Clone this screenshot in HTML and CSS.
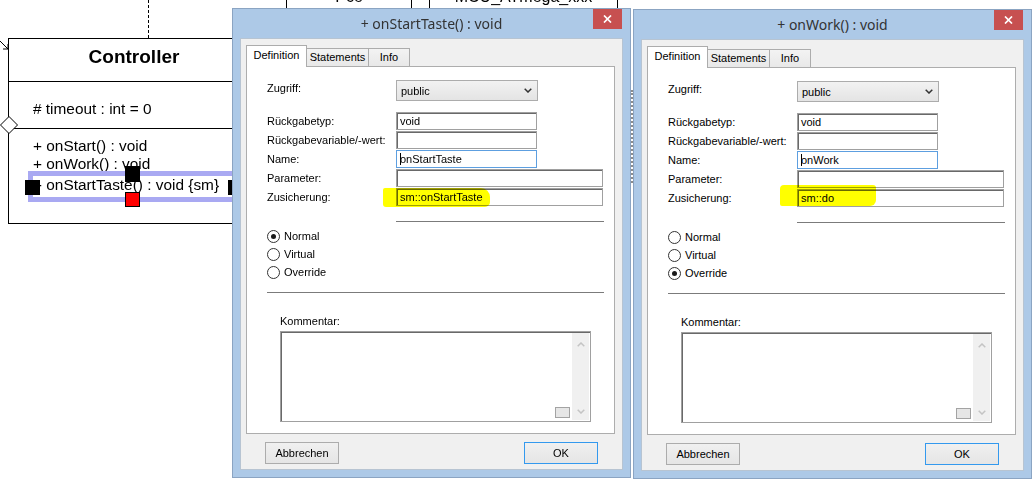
FILE: index.html
```html
<html lang="de">
<head>
    <meta charset="UTF-8">
    <title>Operation bearbeiten</title>
    <link rel="stylesheet" href="styles.css">
</head>
<body>
    <!-- diagram canvas behind the dialogs -->
    <div class="top-box pce">Pce</div>
    <div class="top-box mcu">MCU_ATmega_xxx</div>
    <div class="edge-dash"></div>
    <div class="edge-peek"></div>
    <svg class="edge-arrow" width="10" height="12" viewBox="0 0 10 12">
        <path d="M0 2 L8 10 M3 10 L8 10 L8 5" fill="none" stroke="#000" stroke-width="1"/>
    </svg>
    <svg class="edge-diamond" width="18" height="18" viewBox="0 0 18 18">
        <polygon points="0.5,9 9,0.5 17.5,9 9,17.5" fill="#fff" stroke="#000" stroke-width="1"/>
    </svg>

    <div class="uml-class">
        <div class="uml-name">Controller</div>
        <div class="uml-attrs">
            <div># timeout : int = 0</div>
        </div>
        <div class="uml-ops">
            <div class="op">+ onStart() : void</div>
            <div class="op">+ onWork() : void</div>
            <div class="op selected">
                + onStartTaste() : void {sm}
                <span class="handle h-left"></span>
                <span class="handle h-top"></span>
                <span class="handle h-bottom"></span>
                <span class="handle h-right"></span>
            </div>
        </div>
    </div>

    <!-- Dialog 1 -->
    <div class="dialog d1">
        <div class="titlebar">
            <span class="title">+ onStartTaste() : void</span>
            <span class="close">
                <svg width="9" height="8" viewBox="0 0 9 8"><path d="M1 0.5 L8 7.5 M8 0.5 L1 7.5" stroke="#fff" stroke-width="1.7"/></svg>
            </span>
        </div>
        <div class="client">
            <div class="tabs">
                <div class="tab tab-def active">Definition</div>
                <div class="tab tab-stm">Statements</div>
                <div class="tab tab-info">Info</div>
            </div>
            <div class="panel">
                <div class="access-row">
                    <span class="label">Zugriff:</span>
                    <div class="select">
                        <span>public</span>
                        <svg width="8" height="5" viewBox="0 0 8 5"><path d="M0.7 0.7 L4 4 L7.3 0.7" fill="none" stroke="#333" stroke-width="1.5"/></svg>
                    </div>
                </div>
                <div class="fields">
                    <span class="label">Rückgabetyp:</span>
                    <div class="field">void</div>
                    <span class="label">Rückgabevariable/-wert:</span>
                    <div class="field"></div>
                    <span class="label">Name:</span>
                    <div class="field focus"><span class="caret"></span>onStartTaste</div>
                    <span class="label">Parameter:</span>
                    <div class="field wide"></div>
                    <span class="label">Zusicherung:</span>
                    <div class="field wide">sm::onStartTaste</div>
                </div>
                <div class="sep sep-short"></div>
                <div class="radios">
                    <div class="radio-row"><span class="radio on"></span>Normal</div>
                    <div class="radio-row"><span class="radio"></span>Virtual</div>
                    <div class="radio-row"><span class="radio"></span>Override</div>
                </div>
                <div class="sep sep-long"></div>
                <div class="comment-label">Kommentar:</div>
                <div class="textarea">
                    <div class="scroll">
                        <svg width="8" height="5" viewBox="0 0 8 5"><path d="M0.7 4.3 L4 1 L7.3 4.3" fill="none" stroke="#c4c4c4" stroke-width="1.5"/></svg>
                        <svg width="8" height="5" viewBox="0 0 8 5"><path d="M0.7 0.7 L4 4 L7.3 0.7" fill="none" stroke="#c4c4c4" stroke-width="1.5"/></svg>
                    </div>
                    <span class="grip"></span>
                </div>
            </div>
            <div class="buttons">
                <button>Abbrechen</button>
                <button class="ok">OK</button>
            </div>
        </div>
        <span class="mark mark1"></span>
    </div>

    <!-- Dialog 2 -->
    <div class="dialog d2">
        <div class="titlebar">
            <span class="title">+ onWork() : void</span>
            <span class="close">
                <svg width="9" height="8" viewBox="0 0 9 8"><path d="M1 0.5 L8 7.5 M8 0.5 L1 7.5" stroke="#fff" stroke-width="1.7"/></svg>
            </span>
        </div>
        <div class="client">
            <div class="tabs">
                <div class="tab tab-def active">Definition</div>
                <div class="tab tab-stm">Statements</div>
                <div class="tab tab-info">Info</div>
            </div>
            <div class="panel">
                <div class="access-row">
                    <span class="label">Zugriff:</span>
                    <div class="select">
                        <span>public</span>
                        <svg width="8" height="5" viewBox="0 0 8 5"><path d="M0.7 0.7 L4 4 L7.3 0.7" fill="none" stroke="#333" stroke-width="1.5"/></svg>
                    </div>
                </div>
                <div class="fields">
                    <span class="label">Rückgabetyp:</span>
                    <div class="field">void</div>
                    <span class="label">Rückgabevariable/-wert:</span>
                    <div class="field"></div>
                    <span class="label">Name:</span>
                    <div class="field focus"><span class="caret"></span>onWork</div>
                    <span class="label">Parameter:</span>
                    <div class="field wide"></div>
                    <span class="label">Zusicherung:</span>
                    <div class="field wide">sm::do</div>
                </div>
                <div class="sep sep-short"></div>
                <div class="radios">
                    <div class="radio-row"><span class="radio"></span>Normal</div>
                    <div class="radio-row"><span class="radio"></span>Virtual</div>
                    <div class="radio-row"><span class="radio on"></span>Override</div>
                </div>
                <div class="sep sep-long"></div>
                <div class="comment-label">Kommentar:</div>
                <div class="textarea">
                    <div class="scroll">
                        <svg width="8" height="5" viewBox="0 0 8 5"><path d="M0.7 4.3 L4 1 L7.3 4.3" fill="none" stroke="#c4c4c4" stroke-width="1.5"/></svg>
                        <svg width="8" height="5" viewBox="0 0 8 5"><path d="M0.7 0.7 L4 4 L7.3 0.7" fill="none" stroke="#c4c4c4" stroke-width="1.5"/></svg>
                    </div>
                    <span class="grip"></span>
                </div>
            </div>
            <div class="buttons">
                <button>Abbrechen</button>
                <button class="ok">OK</button>
            </div>
        </div>
        <span class="mark mark2"></span>
    </div>
</body>
</html>
```

FILE: styles.css
```css
/* General */
* {
    box-sizing: border-box;
}
body {
    margin: 0;
    width: 1036px;
    height: 484px;
    position: relative;
    overflow: hidden;
    background: #fff;
    font-family: "Liberation Sans", Arial, sans-serif;
    color: #000;
}

/* Diagram canvas */
.top-box {
    position: absolute;
    top: -30px;
    height: 38px;
    border-left: 1px solid #000;
    border-right: 1px solid #000;
    display: flex;
    justify-content: center;
    align-items: flex-end;
    padding-bottom: 2px;
    font-size: 16px;
    line-height: 18px;
}
.pce {
    left: 286px;
    width: 126px;
}
.mcu {
    left: 429px;
    width: 189px;
}
.edge-dash {
    position: absolute;
    left: 148px;
    top: 0;
    height: 38px;
    border-left: 1px dashed #000;
}
.edge-peek {
    position: absolute;
    left: 631px;
    top: 90px;
    height: 93px;
    border-left: 2px dotted #8c8c8c;
}
.edge-arrow {
    position: absolute;
    left: 0;
    top: 39px;
}
.edge-diamond {
    position: absolute;
    left: 0;
    top: 116px;
    z-index: 2;
}
.uml-class {
    position: absolute;
    left: 8px;
    top: 38px;
    width: 252px;
    height: 186px;
    border: 1px solid #000;
    font-size: 15.4px;
    background: #fff;
}
.uml-name {
    height: 43px;
    border-bottom: 1px solid #000;
    text-align: center;
    font-weight: bold;
    font-size: 19px;
    line-height: 22px;
    padding-top: 7px;
}
.uml-attrs {
    height: 47px;
    border-bottom: 1px solid #000;
    padding: 18px 0 0 24px;
    line-height: 18px;
}
.uml-ops {
    padding: 8px 0 0 24px;
    line-height: 18px;
}
.op {
    white-space: nowrap;
}
.op.selected {
    position: relative;
    margin: -2px 0 0 -5px;
    width: 209px;
    height: 31px;
    border: 5px solid #a9a9f2;
    background: #fff;
    line-height: 17px;
}
.handle {
    position: absolute;
    width: 15px;
    height: 15px;
    background: #000;
}
.h-left {
    left: -8px;
    top: 4px;
}
.h-right {
    left: 195px;
    top: 4px;
}
.h-top {
    left: 92px;
    top: -10px;
    height: 16px;
}
.h-bottom {
    left: 92px;
    top: 16px;
    background: #f00;
    border: 1px solid #000;
}

/* Dialog windows */
.dialog {
    position: absolute;
    width: 399px;
    height: 470px;
    border: 1px solid #8ba4c2;
    background: #adc9e7;
    display: flex;
    flex-direction: column;
    font-size: 11px;
}
.d1 {
    left: 232px;
    top: 8px;
}
.d2 {
    left: 633px;
    top: 9px;
}
.titlebar {
    height: 29px;
    position: relative;
    display: flex;
    align-items: center;
    justify-content: center;
    font-family: "Noto Sans", sans-serif;
    font-size: 14px;
    color: #333;
}
.close {
    position: absolute;
    right: 8px;
    top: 0;
    width: 29px;
    height: 20px;
    background: #c75050;
    display: flex;
    align-items: center;
    justify-content: center;
}
.client {
    flex: 1;
    margin: 0 7px 7px;
    border: 1px solid #b7c4d2;
    background: #f0f0f0;
    padding: 6px 7px 0 5px;
    display: flex;
    flex-direction: column;
}
.tabs {
    display: flex;
    align-items: flex-end;
    height: 21px;
    position: relative;
    z-index: 1;
}
.tab {
    height: 18px;
    border: 1px solid #acacac;
    border-bottom: none;
    background: linear-gradient(#f3f3f3, #e8e8e8);
    line-height: 16px;
    text-align: center;
}
.tab.active {
    height: 22px;
    margin-bottom: -1px;
    background: #fff;
    line-height: 19px;
    position: relative;
    z-index: 2;
}
.tab-def {
    width: 61px;
}
.tab-stm {
    width: 63px;
    margin-left: -1px;
}
.tab-info {
    width: 42px;
    margin-left: -1px;
}
.panel {
    height: 368px;
    border: 1px solid #adadad;
    background: #fff;
    padding: 13px 0 0 20px;
}
.label {
    white-space: nowrap;
    line-height: 13px;
}
.access-row {
    display: flex;
    height: 21px;
    margin-bottom: 11px;
}
.access-row .label {
    width: 129px;
    padding-top: 2px;
}
.select {
    width: 142px;
    height: 21px;
    border: 1px solid #acacac;
    background: linear-gradient(#f2f2f2, #e4e4e4);
    display: flex;
    align-items: center;
    justify-content: space-between;
    padding: 0 5px 0 4px;
}
.fields {
    display: grid;
    grid-template-columns: 129px auto;
    grid-auto-rows: 18px;
    row-gap: 1px;
    align-items: center;
}
.field {
    width: 141px;
    height: 18px;
    border: 1px solid #a0a0a0;
    box-shadow: inset 1px 1px 0 #696969;
    background: #fff;
    padding-left: 3px;
    line-height: 16px;
    white-space: nowrap;
}
.field.wide {
    width: 207px;
}
.field.focus {
    border-color: #5d9fe0;
    box-shadow: none;
}
.caret {
    display: inline-block;
    width: 1px;
    height: 12px;
    background: #000;
    margin-right: -1px;
    vertical-align: -2px;
}
.sep {
    height: 1px;
    background: #7b7b7b;
}
.sep-short {
    margin: 15px 0 0 129px;
    width: 208px;
}
.sep-long {
    margin-top: 11px;
    width: 337px;
}
.radios {
    margin-top: 5px;
}
.radio-row {
    height: 18px;
    display: flex;
    align-items: center;
    gap: 4px;
}
.radio {
    width: 13px;
    height: 13px;
    border-radius: 50%;
    border: 1px solid #333;
    background: #fff;
    display: flex;
    align-items: center;
    justify-content: center;
}
.radio.on::after {
    content: "";
    width: 5px;
    height: 5px;
    border-radius: 50%;
    background: #1a1a1a;
}
.comment-label {
    margin: 22px 0 0 13px;
    line-height: 13px;
}
.textarea {
    position: relative;
    margin: 3px 0 0 13px;
    width: 311px;
    height: 91px;
    border: 1px solid #a0a0a0;
    box-shadow: inset 1px 1px 0 #696969;
    background: #fff;
    display: flex;
    justify-content: flex-end;
    padding: 1px 1px 1px 2px;
}
.scroll {
    width: 17px;
    background: #f0f0f0;
    display: flex;
    flex-direction: column;
    justify-content: space-between;
    align-items: center;
    padding: 9px 0 6px;
}
.grip {
    position: absolute;
    right: 20px;
    bottom: 3px;
    width: 15px;
    height: 11px;
    border: 1px solid #a3a3a3;
    background: #e6e6e6;
}
.buttons {
    display: flex;
    justify-content: space-between;
    margin-top: 8px;
    padding: 0 17px 0 19px;
}
.buttons button {
    width: 74px;
    height: 22px;
    border: 1px solid #acacac;
    background: linear-gradient(#f0f0f0, #e5e5e5);
    font-family: "Liberation Sans", Arial, sans-serif;
    font-size: 11px;
    color: #000;
    padding: 0;
}
.buttons .ok {
    border-color: #3399ee;
}

/* highlighter marks on top of the dialogs */
.mark {
    position: absolute;
    background: #ffff00;
    mix-blend-mode: multiply;
}
.mark1 {
    left: 150px;
    top: 179px;
    width: 107px;
    height: 19px;
    border-radius: 2px 9px 5px 3px;
}
.mark2 {
    left: 146px;
    top: 175px;
    width: 96px;
    height: 21px;
    border-radius: 4px 3px 6px 2px;
}
```
